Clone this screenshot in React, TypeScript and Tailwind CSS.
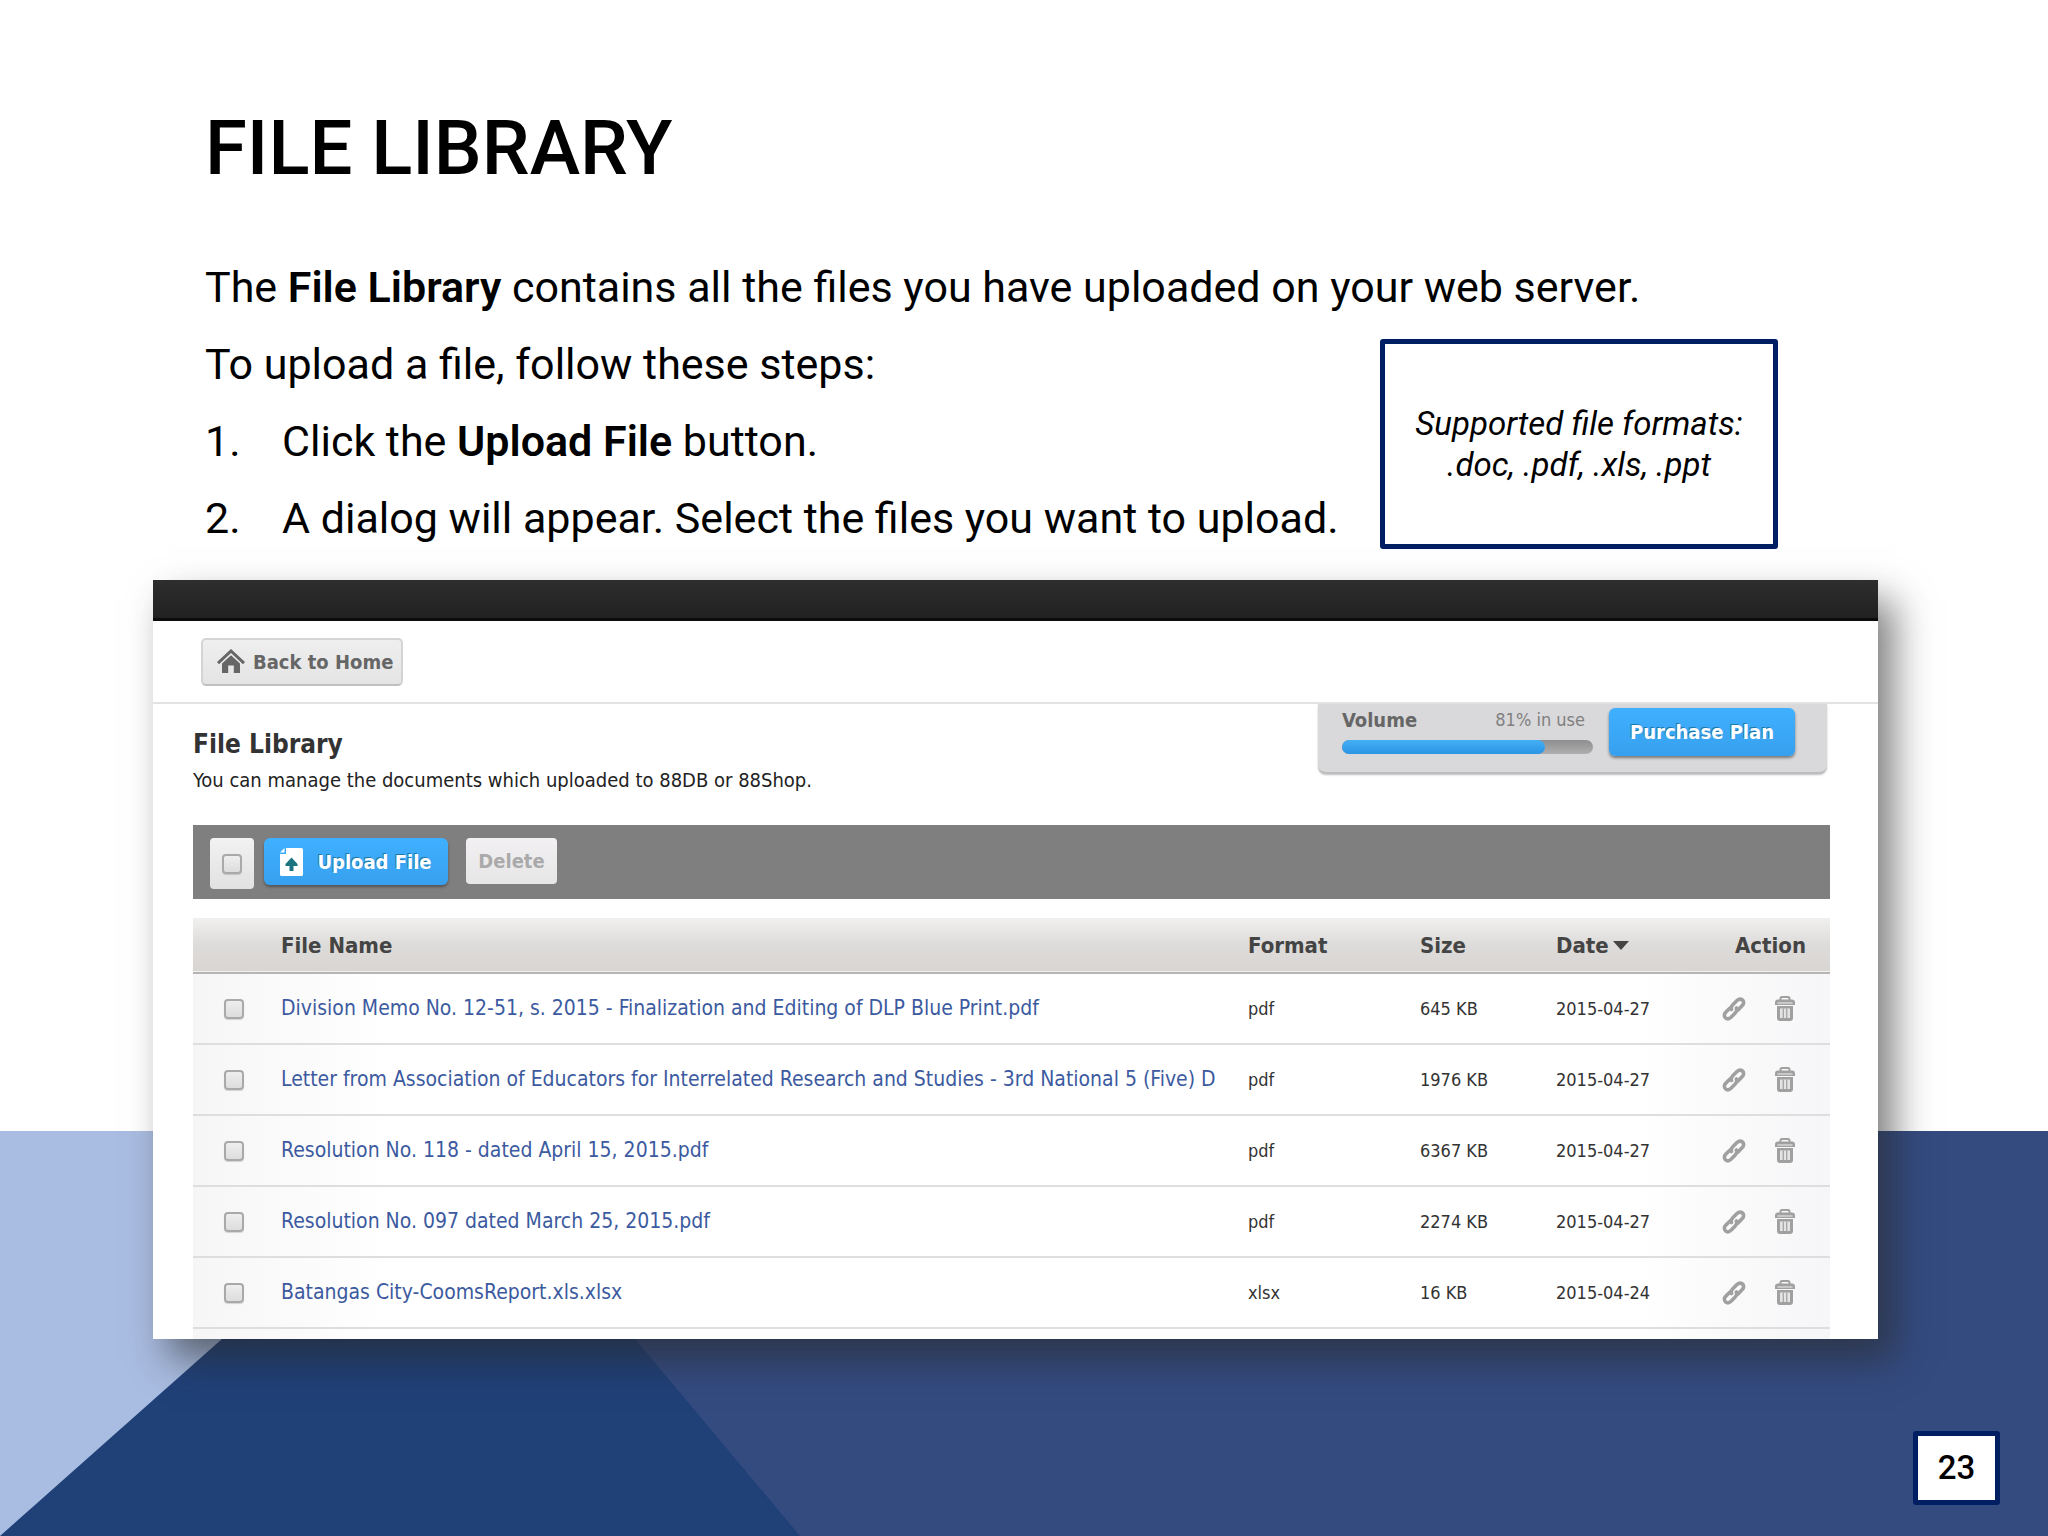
import { ReactNode } from 'react';

type FileRow = { name: string; format: string; size: string; date: string };

const files: FileRow[] = [
  { name: 'Division Memo No. 12-51, s. 2015 - Finalization and Editing of DLP Blue Print.pdf', format: 'pdf', size: '645 KB', date: '2015-04-27' },
  { name: 'Letter from Association of Educators for Interrelated Research and Studies - 3rd National 5 (Five) D', format: 'pdf', size: '1976 KB', date: '2015-04-27' },
  { name: 'Resolution No. 118 - dated April 15, 2015.pdf', format: 'pdf', size: '6367 KB', date: '2015-04-27' },
  { name: 'Resolution No. 097 dated March 25, 2015.pdf', format: 'pdf', size: '2274 KB', date: '2015-04-27' },
  { name: 'Batangas City-CoomsReport.xls.xlsx', format: 'xlsx', size: '16 KB', date: '2015-04-24' },
];

const volumeUsed = 81;

function HomeIcon() {
  return (
    <svg viewBox="0 0 28 25" className="w-7 h-[25px] shrink-0" fill="#666" aria-hidden="true">
      <path d="M14 0 28 13l-2 2.2L14 4 2 15.2 0 13z" />
      <path d="M14 6.2 23 14.5V24h-6.2v-7.5h-5.6V24H5v-9.5z" />
    </svg>
  );
}

function UploadIcon() {
  return (
    <svg viewBox="0 0 23 28" className="w-[23px] h-7 shrink-0" aria-hidden="true">
      <path d="M6 0h15.5A1.5 1.5 0 0 1 23 1.5v25a1.5 1.5 0 0 1-1.5 1.5h-20A1.5 1.5 0 0 1 0 26.5V6h6z" fill="#fff" />
      <path d="M0 4.5 4.5 0v4.5z" fill="#fff" />
      <path d="M11.5 9.5 17.5 16v2h-4v5h-4v-5h-4v-2z" fill="#1b7380" />
    </svg>
  );
}

function LinkIcon() {
  return (
    <svg viewBox="0 0 24 24" className="w-6 h-6" fill="none" stroke="#a0a0a0" strokeWidth="3.6" strokeLinecap="round" aria-hidden="true">
      <path d="M9.5 12.5c-1-2 0-3.5 1.5-5l4-4c1.8-1.7 4-1.7 5.500-.5s1.500 3.700 0 5.300L16 13" />
      <path d="M14.3 11c1 2 .3 3.7-1.300 5.300l-4 4c-1.800 1.700-4 1.700-5.500.5s-1.500-3.700 0-5.300L7.500 11.500" />
    </svg>
  );
}

function TrashIcon() {
  return (
    <svg viewBox="0 0 20 25" className="w-5 h-[25px]" aria-hidden="true">
      <path d="M5.5 4V2.5A1.5 1.5 0 0 1 7 1h6a1.5 1.5 0 0 1 1.5 1.5V4" fill="none" stroke="#a0a0a0" strokeWidth="2" />
      <path d="M3 3.5h14a3 3 0 0 1 3 3V9H0V6.5a3 3 0 0 1 3-3z" fill="#a0a0a0" />
      <path d="M2.5 7h15" stroke="#c8c8c8" strokeWidth="2" />
      <path d="M2 10h16v12a3 3 0 0 1-3 3H5a3 3 0 0 1-3-3z" fill="#a0a0a0" />
      <path d="M5 12.5h10V22H5z" fill="#e4e4e4" />
      <path d="M8.300 12.500V22M11.700 12.500V22" stroke="#a8a8a8" strokeWidth="1.4" />
    </svg>
  );
}

function Checkbox({ label }: { label: string }) {
  return (
    <input
      type="checkbox"
      aria-label={label}
      className="block appearance-none size-5 rounded-[4px] border-2 border-[#a9a9a9] bg-linear-to-b from-[#eeeeee] to-[#dddddd] shadow-[0_1px_1px_rgba(0,0,0,0.15)]"
    />
  );
}

function Step({ number, children }: { number: string; children: ReactNode }) {
  return (
    <li className="flex">
      <span className="w-[77px] shrink-0">{number}</span>
      <span>{children}</span>
    </li>
  );
}

function Backdrop() {
  return (
    <svg viewBox="0 0 2048 405" preserveAspectRatio="none" className="absolute inset-x-0 bottom-0 -z-10 w-full h-[405px]" aria-hidden="true">
      <rect width="2048" height="405" fill="#344b80" />
      <path d="M0 0h461L800 405H0z" fill="#204078" />
      <path d="M0 0h456L0 405z" fill="#a9bce1" />
    </svg>
  );
}

export default function App() {
  return (
    <main className="relative isolate flex flex-col min-h-screen bg-white text-black font-[Roboto,sans-serif]">
      <Backdrop />

      <section className="pt-[102px] pl-[205px] pr-[270px] text-[43px] leading-[77px]">
        <h1 className="text-[76px] leading-[92px] font-medium">FILE LIBRARY</h1>
        <p className="pt-[55px]">
          The <b className="font-semibold">File Library</b> contains all the files you have uploaded on your web server.
        </p>
        <div className="flex justify-between items-start">
          <div>
            <p>To upload a file, follow these steps:</p>
            <ol>
              <Step number="1.">
                Click the <b className="font-semibold">Upload File</b> button.
              </Step>
              <Step number="2.">A dialog will appear. Select the files you want to upload.</Step>
            </ol>
          </div>
          <aside className="flex items-center justify-center mt-[13px] w-[398px] h-[210px] shrink-0 rounded-[3px] border-5 border-[#001f62] text-center text-[33px] leading-[41px] italic">
            <p>
              Supported file formats:
              <br />
              .doc, .pdf, .xls, .ppt
            </p>
          </aside>
        </div>
      </section>

      <section className="ml-[153px] mr-[170px] mt-[23px] bg-white shadow-[16px_20px_36px_rgba(40,40,40,0.6)] font-['DejaVu_Sans_Condensed','DejaVu_Sans',sans-serif]">
        <div className="h-[41px] bg-linear-to-b from-[#2e2e2e] to-[#212121] border-b-3 border-[#0c0c0c]" />

        <div className="flex items-center h-[83px] pl-12 border-b-2 border-[#e3e3e3]">
          <button className="flex items-center gap-2 h-12 pl-3.5 pr-2 rounded-[5px] border-2 border-[#d4d4d4] border-b-[#bfbfbf] bg-linear-to-b from-[#efefef] to-[#e5e4e5] text-[20px] font-bold text-[#666]">
            <HomeIcon />
            Back to Home
          </button>
        </div>

        <div className="pl-10 pr-12">
          <header className="flex justify-between items-start h-[121px]">
            <div className="pt-[22px]">
              <h2 className="text-[26px] leading-9 font-bold text-[#333]">File Library</h2>
              <p className="text-[20px] leading-9 text-[#222]">You can manage the documents which uploaded to 88DB or 88Shop.</p>
            </div>
            <div className="flex mr-[3px] pt-1 pb-4 pl-6 pr-8 gap-4 rounded-b-lg bg-[#d9d8da] border-b-2 border-[#bdbdbd] shadow-[0_1px_2px_rgba(0,0,0,0.25)]">
              <div className="w-[251px]">
                <div className="flex justify-between pr-2 leading-6 text-[#666]">
                  <span className="text-[20px] font-bold">Volume</span>
                  <span className="text-[18px] text-[#808080]">{volumeUsed}% in use</span>
                </div>
                <div className="mt-2 h-3.5 rounded-full bg-linear-to-b from-[#8e8e8e] to-[#b0aeb0]">
                  <div className="h-full rounded-full bg-linear-to-b from-[#45aff5] to-[#2b94e4]" style={{ width: `${volumeUsed}%` }} />
                </div>
              </div>
              <button className="h-12 w-[186px] rounded-md bg-linear-to-b from-[#3fb0ff] to-[#37a0ee] shadow-[0_2px_3px_rgba(0,0,0,0.45)] text-[20px] font-bold text-white [text-shadow:-1px_-1px_0_#1d78a8]">
                Purchase Plan
              </button>
            </div>
          </header>

          <div className="flex items-start h-[74px] pt-[13px] pl-[17px] bg-[#807f80]">
            <div className="flex justify-center items-center w-11 h-[51px] rounded-[4px] bg-linear-to-b from-[#f2f2f2] to-[#e2e1e2]">
              <Checkbox label="Select all files" />
            </div>
            <button className="flex items-center justify-center gap-3.5 ml-2.5 w-[184px] h-[47px] rounded-md bg-linear-to-b from-[#3fb0ff] to-[#37a0ee] shadow-[0_2px_3px_rgba(0,0,0,0.35)] text-[20px] font-bold text-white [text-shadow:-1px_-1px_0_#1d78a8]">
              <UploadIcon />
              Upload File
            </button>
            <button className="ml-[18px] w-[91px] h-[46px] rounded-[4px] bg-linear-to-b from-[#f2f0f2] to-[#e7e6e7] text-[20px] font-bold text-[#aaa]">Delete</button>
          </div>

          <table className="mt-[19px] w-full table-fixed text-left text-[18px] text-[#333]">
            <colgroup>
              <col className="w-[88px]" />
              <col />
              <col className="w-[172px]" />
              <col className="w-[136px]" />
              <col className="w-[156px]" />
              <col className="w-[118px]" />
            </colgroup>
            <thead>
              <tr className="h-[55px] bg-linear-to-b from-[#f0f0ef] via-[#dedcda] to-[#d8d5d3] border-b-2 border-[#b8b4b3] text-[22px] text-[#444]">
                <th />
                <th>File Name</th>
                <th>Format</th>
                <th>Size</th>
                <th>
                  <button className="flex items-center gap-1 font-bold">
                    Date
                    <svg viewBox="0 0 16 9" className="w-4 h-[9px]" fill="#444" aria-hidden="true">
                      <path d="M0 0h16L8 9z" />
                    </svg>
                  </button>
                </th>
                <th className="pr-6 text-right">Action</th>
              </tr>
            </thead>
            <tbody>
              {files.map((file) => (
                <tr key={file.name} className="h-[71px] border-b-2 border-[#dededf] bg-[linear-gradient(to_right,#f7f6f7,#fff_12%,#fff_88%,#f6f5f7)]">
                  <td className="pl-[31px]">
                    <Checkbox label={`Select ${file.name}`} />
                  </td>
                  <td className="text-[21px] whitespace-nowrap">
                    <a href="#" className="text-[#3c5aa0]">{file.name}</a>
                  </td>
                  <td>{file.format}</td>
                  <td>{file.size}</td>
                  <td>{file.date}</td>
                  <td>
                    <div className="flex items-center justify-between pl-2.5 pr-[35px]">
                      <button aria-label="Copy link"><LinkIcon /></button>
                      <button aria-label="Delete file"><TrashIcon /></button>
                    </div>
                  </td>
                </tr>
              ))}
            </tbody>
          </table>
          <div className="h-2.5 bg-[linear-gradient(to_right,#f7f6f7,#fff_12%,#fff_88%,#f6f5f7)]" />
        </div>
      </section>

      <footer className="flex justify-end mt-auto pr-12 pb-[31px]">
        <span className="flex items-center justify-center w-[87px] h-[74px] rounded-[3px] border-5 border-[#001f62] bg-white text-[33px] font-medium">23</span>
      </footer>
    </main>
  );
}
